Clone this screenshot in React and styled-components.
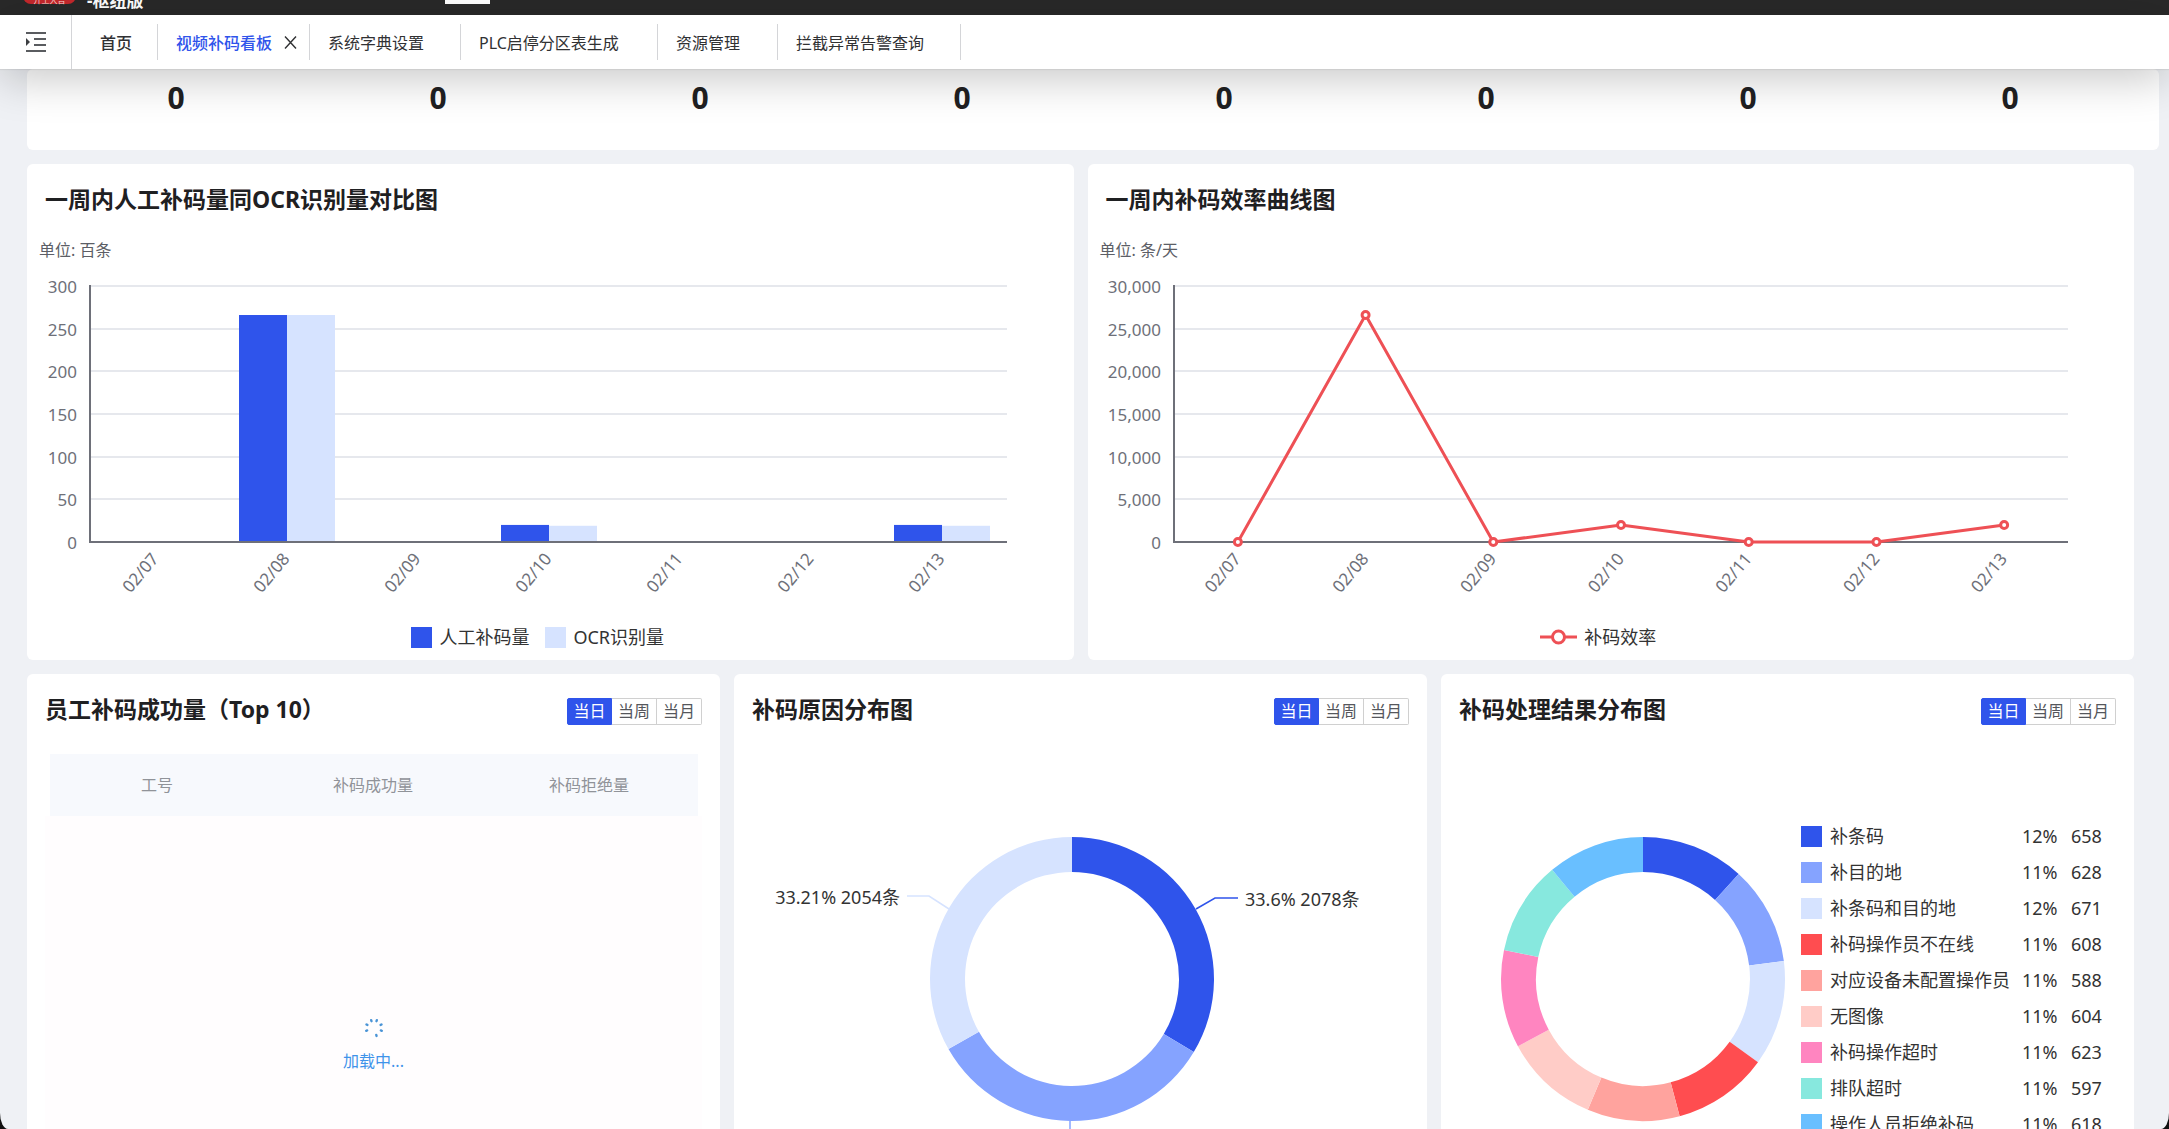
import React, { useLayoutEffect, useRef, useState } from "react";
import styled, { createGlobalStyle, css } from "styled-components";

const colors = {
  blue: "#2f54eb",
  periwinkle: "#85a3ff",
  pale: "#d6e3ff",
  red: "#ff4d50",
  salmon: "#ffa39e",
  blush: "#ffccc7",
  pink: "#ff85c0",
  mint: "#87e8de",
  sky: "#69bfff",
  line: "#ee5055",
  axis: "#6e7079",
  grid: "#e6e8ed",
  text: "#333333",
  title: "#1f2022",
};

const Global = createGlobalStyle`
  * { box-sizing: border-box; }
  body {
    margin: 0;
    background: #111111;
    font-family: "Noto Sans", "Noto Sans CJK SC", sans-serif;
    font-size: 16px;
    color: ${colors.text};
  }
  button { font-family: inherit; }
`;

const Page = styled.div`
  display: flex;
  flex-direction: column;
  height: 100vh;
  overflow: hidden;
  background: #eff1f5;
  border-radius: 0 0 8px 8px / 0 0 16px 16px;
`;

const TopBar = styled.header`
  display: flex;
  flex: none;
  align-items: flex-end;
  height: 15px;
  padding-left: 23px;
  overflow: hidden;
  background: #292929;
`;

const Logo = styled.div`
  display: flex;
  align-items: flex-end;
  justify-content: center;
  width: 53px;
  height: 30px;
  margin-bottom: 11px;
  border-radius: 8px;
  background: #c5282c;
  color: #ffd9d2;
  font-size: 8px;
  line-height: 9px;
`;

const Product = styled.div`
  width: 358px;
  margin: 0 0 4px 11px;
  color: #ffffff;
  font-size: 17px;
  line-height: 20px;
  font-weight: 700;
`;

const TopTab = styled.div`
  width: 45px;
  height: 20px;
  margin: 0 0 11px;
  background: #ffffff;
`;

const TabBar = styled.nav`
  position: relative;
  z-index: 1;
  display: flex;
  flex: none;
  align-items: center;
  height: 54px;
  background: #ffffff;
  box-shadow: 0 1px 1px rgba(0, 0, 0, 0.06), 0 10px 44px rgba(0, 0, 0, 0.22);
`;

const MenuButton = styled.button`
  display: flex;
  align-items: center;
  width: 72px;
  height: 54px;
  padding: 0 0 0 26px;
  border: 0;
  border-right: 1px solid #d4d5d8;
  background: none;
`;

const Tab = styled.button`
  display: flex;
  align-items: center;
  gap: 12px;
  width: ${(p) => p.$width}px;
  height: 36px;
  padding: 0 0 0 ${(p) => (p.$first ? 28 : 18)}px;
  border: 0;
  border-right: 1px solid #d4d5d8;
  background: none;
  color: ${(p) => (p.$active ? colors.blue : "#303133")};
  font-size: 16px;
  font-weight: ${(p) => (p.$active || p.$first ? 500 : 400)};
  white-space: nowrap;
`;

const Content = styled.main`
  display: flex;
  flex-direction: column;
  gap: 14px;
  padding: 0 35px 0 27px;
`;

const Card = styled.section`
  display: flex;
  flex-direction: column;
  min-width: 0;
  border-radius: 6px;
  background: #ffffff;
`;

const Stats = styled(Card)`
  flex-direction: row;
  height: 81px;
  margin-right: -25px;
  padding: 8px 18px 0;
`;

const Stat = styled.div`
  flex: 1;
  color: ${colors.title};
  font-size: 30px;
  line-height: 42px;
  font-weight: 700;
  text-align: center;
`;

const Row = styled.div`
  display: grid;
  grid-template-columns: repeat(${(p) => p.$columns}, minmax(0, 1fr));
  gap: 14px;
`;

const CardHead = styled.header`
  display: flex;
  align-items: center;
  justify-content: space-between;
  height: 74px;
  padding: 0 18px;
`;

const Title = styled.h2`
  margin: 0 0 4px;
  color: ${colors.title};
  font-size: 23px;
  line-height: 30px;
  font-weight: 700;
`;

const Unit = styled.div`
  padding-left: 12px;
  color: #5c5e66;
  font-size: 16px;
  line-height: 24px;
  margin-bottom: 2px;
`;

const ChartBox = styled.div`
  width: 100%;
  height: ${(p) => p.$height}px;

  svg {
    display: block;
  }
`;

const axisText = css`
  fill: ${colors.axis};
  font-size: 17px;
`;

const AxisLabel = styled.text`
  ${axisText}
  text-anchor: end;
  dominant-baseline: central;
`;

const Callout = styled.text`
  fill: ${colors.text};
  font-size: 18px;
  dominant-baseline: central;
  text-anchor: ${(p) => p.$anchor};
`;

const Legend = styled.div`
  display: flex;
  align-items: center;
  justify-content: center;
  gap: 16px;
  height: 46px;
  padding-right: 25px;
`;

const LegendItem = styled.div`
  display: flex;
  align-items: center;
  gap: 7px;
  font-size: 18px;
  line-height: 24px;
`;

const Swatch = styled.i`
  flex: none;
  width: 21px;
  height: 21px;
  background: ${(p) => p.$color};
`;

const Group = styled.div`
  display: flex;
`;

const RangeButton = styled.button`
  width: 45px;
  height: 27px;
  padding: 0;
  border: 1px solid ${(p) => (p.$active ? colors.blue : "#d0d0d0")};
  border-left-width: ${(p) => (p.$active ? 1 : 0)}px;
  background: ${(p) => (p.$active ? colors.blue : "#ffffff")};
  color: ${(p) => (p.$active ? "#ffffff" : "#55575c")};
  font-size: 16px;
  line-height: 24px;

  &:first-child {
    border-radius: 2px 0 0 2px;
  }
  &:last-child {
    border-radius: 0 2px 2px 0;
  }
`;

const TableWrap = styled.div`
  padding: 6px 22px 0 23px;
`;

const Table = styled.table`
  width: 100%;
  border-collapse: collapse;
  table-layout: fixed;

  th {
    height: 62px;
    padding: 0 2px 2px 0;
    background: #f7f9fd;
    color: #909399;
    font-size: 16px;
    font-weight: 400;
    text-align: center;
  }
`;

const Loading = styled.div`
  display: flex;
  flex-direction: column;
  align-items: center;
  gap: 11px;
  height: 400px;
  margin: 0 18px;
  padding-top: 202px;
  background: #fffdfe;
  color: #3f93ea;
  font-size: 16px;
  line-height: 24px;
`;

const ResultBody = styled.div`
  display: flex;
  height: 500px;
`;

const ResultChart = styled.div`
  flex: 1;
  min-width: 0;
`;

const ResultList = styled.ul`
  display: grid;
  grid-auto-rows: 36px;
  align-content: start;
  width: 333px;
  margin: 0;
  padding: 70px 0 0;
  list-style: none;
`;

const ResultItem = styled.li`
  display: grid;
  grid-template-columns: 29px 192px 49px 1fr;
  align-items: center;
  color: ${colors.text};
  font-size: 18px;
  line-height: 24px;
  white-space: nowrap;
`;

function Chart({ height, children }) {
  const ref = useRef(null);
  const [width, setWidth] = useState(0);
  useLayoutEffect(() => {
    const measure = () => setWidth(Math.round(ref.current.clientWidth));
    measure();
    const observer = new ResizeObserver(measure);
    observer.observe(ref.current);
    return () => observer.disconnect();
  }, []);
  return (
    <ChartBox ref={ref} $height={height}>
      {width > 0 && (
        <svg width={width} height={height}>
          {children(width)}
        </svg>
      )}
    </ChartBox>
  );
}

const days = ["02/07", "02/08", "02/09", "02/10", "02/11", "02/12", "02/13"];
const TOP = 22;
const BOTTOM = 278;

function Axes({ left, right, ticks }) {
  const step = (BOTTOM - TOP) / (ticks.length - 1);
  const band = (right - left) / days.length;
  return (
    <g>
      {ticks.map((t, i) => {
        const y = Math.round(BOTTOM - i * step);
        return (
          <g key={t}>
            {i > 0 && <path d={`M${left} ${y}H${right}`} stroke={colors.grid} strokeWidth="2" />}
            <AxisLabel x={left - 13} y={y}>{t}</AxisLabel>
          </g>
        );
      })}
      {days.map((d, i) => {
        const x = left + band * (i + 0.5) - 1;
        return (
          <AxisLabel key={d} x={x} y={BOTTOM + 13} transform={`rotate(-50 ${x} ${BOTTOM + 13})`}>
            {d}
          </AxisLabel>
        );
      })}
    </g>
  );
}

function AxisLines({ left, right }) {
  return <path d={`M${left} ${TOP - 1}V${BOTTOM}H${right}`} fill="none" stroke={colors.axis} strokeWidth="2" />;
}

const manual = [0, 266, 0, 20, 0, 0, 20];
const ocr = [0, 266, 0, 19, 0, 0, 19];

function BarChart() {
  return (
    <Chart height={350}>
      {(w) => {
        const left = 63;
        const right = w - 67;
        const band = (right - left) / days.length;
        const size = 48;
        const scale = (BOTTOM - TOP) / 300;
        return (
          <>
            <Axes left={left} right={right} ticks={["0", "50", "100", "150", "200", "250", "300"]} />
            {days.map((d, i) => {
              const cx = Math.round(left + band * (i + 0.5));
              return (
                <g key={d}>
                  <rect x={cx - size} y={BOTTOM - manual[i] * scale} width={size} height={manual[i] * scale} fill={colors.blue} />
                  <rect x={cx} y={BOTTOM - ocr[i] * scale} width={size} height={ocr[i] * scale} fill={colors.pale} />
                </g>
              );
            })}
            <AxisLines left={left} right={right} />
          </>
        );
      }}
    </Chart>
  );
}

const efficiency = [0, 26600, 0, 2000, 0, 0, 2000];

function LineChart() {
  return (
    <Chart height={350}>
      {(w) => {
        const left = 86;
        const right = w - 67;
        const band = (right - left) / days.length;
        const points = efficiency.map((v, i) => [
          left + band * (i + 0.5),
          BOTTOM - (v * (BOTTOM - TOP)) / 30000,
        ]);
        return (
          <>
            <Axes
              left={left}
              right={right}
              ticks={["0", "5,000", "10,000", "15,000", "20,000", "25,000", "30,000"]}
            />
            <AxisLines left={left} right={right} />
            <polyline points={points.join(" ")} fill="none" stroke={colors.line} strokeWidth="3" strokeLinejoin="bevel" />
            {points.map(([x, y]) => (
              <circle key={x} cx={x} cy={y} r="3.5" fill="#fff" stroke={colors.line} strokeWidth="3" />
            ))}
          </>
        );
      }}
    </Chart>
  );
}

function Ring({ cx, cy, slices }) {
  const outer = 142;
  const inner = 107;
  const total = slices.reduce((sum, s) => sum + s.value, 0);
  let from = 0;
  const at = (r, share) => {
    const a = share * Math.PI * 2;
    return `${cx + r * Math.sin(a)} ${cy - r * Math.cos(a)}`;
  };
  return slices.map((s) => {
    const start = from;
    const end = from + s.value / total;
    from = end;
    const d = `M${at(outer, start)}A${outer} ${outer} 0 0 1 ${at(outer, end)}L${at(inner, end)}A${inner} ${inner} 0 0 0 ${at(inner, start)}Z`;
    return <path key={s.color} d={d} fill={s.color} />;
  });
}

const reasons = [
  { value: 2078, color: colors.blue },
  { value: 2053, color: colors.periwinkle },
  { value: 2054, color: colors.pale },
];

function ReasonChart() {
  return (
    <Chart height={500}>
      {(w) => {
        const cx = Math.round(w / 2) - 9;
        const cy = 231;
        return (
          <>
            <Ring cx={cx} cy={cy} slices={reasons} />
            <path d={`M${cx + 124} ${cy - 70}L${cx + 143} ${cy - 81}H${cx + 166}`} fill="none" stroke={colors.blue} strokeWidth="1.5" />
            <Callout x={cx + 173} y={cy - 80} $anchor="start">33.6% 2078条</Callout>
            <path d={`M${cx - 123} ${cy - 70}L${cx - 143} ${cy - 83}H${cx - 165}`} fill="none" stroke={colors.pale} strokeWidth="1.5" />
            <Callout x={cx - 172} y={cy - 82} $anchor="end">33.21% 2054条</Callout>
            <path d={`M${cx - 2} ${cy + 142}v20`} stroke={colors.periwinkle} strokeWidth="1.5" />
          </>
        );
      }}
    </Chart>
  );
}

const results = [
  { name: "补条码", share: "12%", value: 658, color: colors.blue },
  { name: "补目的地", share: "11%", value: 628, color: colors.periwinkle },
  { name: "补条码和目的地", share: "12%", value: 671, color: colors.pale },
  { name: "补码操作员不在线", share: "11%", value: 608, color: colors.red },
  { name: "对应设备未配置操作员", share: "11%", value: 588, color: colors.salmon },
  { name: "无图像", share: "11%", value: 604, color: colors.blush },
  { name: "补码操作超时", share: "11%", value: 623, color: colors.pink },
  { name: "排队超时", share: "11%", value: 597, color: colors.mint },
  { name: "操作人员拒绝补码", share: "11%", value: 618, color: colors.sky },
];

const tabs = [
  { label: "首页", width: 86, first: true },
  { label: "视频补码看板", width: 152, active: true },
  { label: "系统字典设置", width: 151 },
  { label: "PLC启停分区表生成", width: 197 },
  { label: "资源管理", width: 120 },
  { label: "拦截异常告警查询", width: 183 },
];

function RangeSwitch() {
  const [current, setCurrent] = useState("当日");
  return (
    <Group>
      {["当日", "当周", "当月"].map((name) => (
        <RangeButton key={name} type="button" $active={name === current} onClick={() => setCurrent(name)}>
          {name}
        </RangeButton>
      ))}
    </Group>
  );
}

const spinnerDots = [-20, 20, 65, 110, 162, 250, 295];

export default function App() {
  return (
    <Page>
      <Global />
      <TopBar>
        <Logo>开工大吉</Logo>
        <Product>-枢纽版</Product>
        <TopTab />
      </TopBar>
      <TabBar>
        <MenuButton type="button" aria-label="menu">
          <svg width="20" height="20" viewBox="0 0 20 20">
            <path d="M0 1H20M8 7H20M8 13H20M0 19H20" stroke="#5a5c60" strokeWidth="2" />
            <path d="M0 6L4 10L0 14Z" fill="#3c3e42" />
          </svg>
        </MenuButton>
        {tabs.map((t) => (
          <Tab key={t.label} type="button" $width={t.width} $first={t.first} $active={t.active}>
            {t.label}
            {t.active && (
              <svg width="13" height="13" viewBox="0 0 13 13">
                <path d="M1 0.5L12 12.5M12 0.5L1 12.5" stroke="#303133" strokeWidth="1.4" />
              </svg>
            )}
          </Tab>
        ))}
      </TabBar>
      <Content>
        <Stats>
          {Array.from({ length: 8 }, (_, i) => (
            <Stat key={i}>0</Stat>
          ))}
        </Stats>
        <Row $columns={2}>
          <Card>
            <CardHead>
              <Title>一周内人工补码量同OCR识别量对比图</Title>
            </CardHead>
            <Unit>单位: 百条</Unit>
            <BarChart />
            <Legend>
              <LegendItem>
                <Swatch $color={colors.blue} />
                人工补码量
              </LegendItem>
              <LegendItem>
                <Swatch $color={colors.pale} />
                OCR识别量
              </LegendItem>
            </Legend>
          </Card>
          <Card>
            <CardHead>
              <Title>一周内补码效率曲线图</Title>
            </CardHead>
            <Unit>单位: 条/天</Unit>
            <LineChart />
            <Legend>
              <LegendItem>
                <svg width="37" height="20" viewBox="0 0 37 20">
                  <path d="M0 10H37" stroke={colors.line} strokeWidth="3" />
                  <circle cx="18.5" cy="10" r="6" fill="#fff" stroke={colors.line} strokeWidth="3" />
                </svg>
                补码效率
              </LegendItem>
            </Legend>
          </Card>
        </Row>
        <Row $columns={3}>
          <Card>
            <CardHead>
              <Title>员工补码成功量（Top 10）</Title>
              <RangeSwitch />
            </CardHead>
            <TableWrap>
              <Table>
                <thead>
                  <tr>
                    <th>工号</th>
                    <th>补码成功量</th>
                    <th>补码拒绝量</th>
                  </tr>
                </thead>
              </Table>
            </TableWrap>
            <Loading>
              <svg width="20" height="20" viewBox="0 0 20 20">
                {spinnerDots.map((deg) => (
                  <rect key={deg} x="8.8" y="0.5" width="2.4" height="3.4" rx="1.2" fill="#4a94d6" transform={`rotate(${deg} 10 10)`} />
                ))}
              </svg>
              加载中...
            </Loading>
          </Card>
          <Card>
            <CardHead>
              <Title>补码原因分布图</Title>
              <RangeSwitch />
            </CardHead>
            <ReasonChart />
          </Card>
          <Card>
            <CardHead>
              <Title>补码处理结果分布图</Title>
              <RangeSwitch />
            </CardHead>
            <ResultBody>
              <ResultChart>
                <Chart height={500}>
                  {(w) => <Ring cx={Math.round(w * 0.56)} cy={231} slices={results} />}
                </Chart>
              </ResultChart>
              <ResultList>
                {results.map((r) => (
                  <ResultItem key={r.name}>
                    <Swatch $color={r.color} />
                    <span>{r.name}</span>
                    <span>{r.share}</span>
                    <span>{r.value}</span>
                  </ResultItem>
                ))}
              </ResultList>
            </ResultBody>
          </Card>
        </Row>
      </Content>
    </Page>
  );
}
